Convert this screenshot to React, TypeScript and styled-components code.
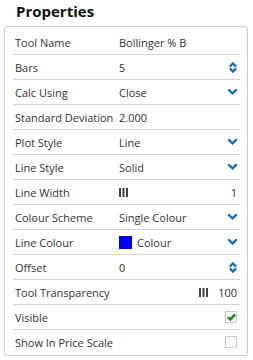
import React from "react";
import styled, { createGlobalStyle } from "styled-components";

const Global = createGlobalStyle`
  html, body { margin: 0; padding: 0; background: #fff; }
  body { font-family: "Open Sans", "Noto Sans", sans-serif; color: #333; }
`;

const Page = styled.div`
  width: 253px;
  height: 360px;
  padding: 0 5px 0 4px;
  box-sizing: border-box;
`;

const Title = styled.h1`
  margin: 0;
  padding: 0 0 0 12px;
  height: 26px;
  line-height: 22px;
  font-size: 15px;
  font-weight: 700;
  color: #111;
`;

const Panel = styled.div`
  border: 1px solid #ccc;
  border-radius: 3px;
  padding: 3px 7px 1px 8px;
`;

const Row = styled.div<{ $last?: boolean }>`
  display: grid;
  grid-template-columns: 104px 1fr auto;
  align-items: center;
  height: 24px;
  padding: 0 3px 0 2px;
  border-bottom: ${(p) => (p.$last ? "none" : "1px solid #d4d4d4")};
  font-size: 11px;
`;

const Label = styled.span`
  white-space: nowrap;
  color: #333;
`;

const Value = styled.span`
  display: flex;
  align-items: center;
  gap: 5px;
  white-space: nowrap;
  color: #333;
`;

const Right = styled.span`
  display: flex;
  align-items: center;
  justify-content: flex-end;
  gap: 10px;
  color: #333;
`;

const Swatch = styled.span<{ $color: string }>`
  display: inline-block;
  width: 13px;
  height: 13px;
  background: ${(p) => p.$color};
`;

const Check = styled.span`
  display: inline-flex;
  align-items: center;
  justify-content: center;
  width: 10px;
  height: 10px;
  border: 1px solid #c8c8c8;
  background: #fff;
`;

const Chevron = () => (
  <svg width="9" height="6" viewBox="0 0 9 6">
    <path d="M1 1 L4.5 4.3 L8 1" fill="none" stroke="#1a6cb6" strokeWidth="2.4" strokeLinecap="square" />
  </svg>
);

const Spinner = () => (
  <svg width="8" height="13" viewBox="0 0 8 13">
    <path d="M0.8 5.6 L4 2.4 L7.2 5.6" fill="none" stroke="#1a6cb6" strokeWidth="2.2" />
    <path d="M0.8 7.4 L4 10.6 L7.2 7.4" fill="none" stroke="#1a6cb6" strokeWidth="2.2" />
  </svg>
);

const Bars = () => (
  <svg width="9" height="9" viewBox="0 0 9 9">
    <rect x="0" y="0" width="2" height="9" fill="#444" />
    <rect x="3.5" y="0" width="2" height="9" fill="#444" />
    <rect x="7" y="0" width="2" height="9" fill="#444" />
  </svg>
);

const Tick = () => (
  <svg width="9" height="8" viewBox="0 0 9 8">
    <path d="M1 4.2 L3.4 6.5 L8 1.5" fill="none" stroke="#238a1e" strokeWidth="2.6" />
  </svg>
);

export default function App() {
  return (
    <Page>
      <Global />
      <Title>Properties</Title>
      <Panel>
        <Row>
          <Label>Tool Name</Label>
          <Value>Bollinger % B</Value>
          <Right />
        </Row>
        <Row>
          <Label>Bars</Label>
          <Value>5</Value>
          <Right><Spinner /></Right>
        </Row>
        <Row>
          <Label>Calc Using</Label>
          <Value>Close</Value>
          <Right><Chevron /></Right>
        </Row>
        <Row>
          <Label>Standard Deviation</Label>
          <Value>2.000</Value>
          <Right />
        </Row>
        <Row>
          <Label>Plot Style</Label>
          <Value>Line</Value>
          <Right><Chevron /></Right>
        </Row>
        <Row>
          <Label>Line Style</Label>
          <Value>Solid</Value>
          <Right><Chevron /></Right>
        </Row>
        <Row>
          <Label>Line Width</Label>
          <Value><Bars /></Value>
          <Right>1</Right>
        </Row>
        <Row>
          <Label>Colour Scheme</Label>
          <Value>Single Colour</Value>
          <Right><Chevron /></Right>
        </Row>
        <Row>
          <Label>Line Colour</Label>
          <Value><Swatch $color="#0000ff" />Colour</Value>
          <Right><Chevron /></Right>
        </Row>
        <Row>
          <Label>Offset</Label>
          <Value>0</Value>
          <Right><Spinner /></Right>
        </Row>
        <Row>
          <Label>Tool Transparency</Label>
          <Value />
          <Right><Bars />100</Right>
        </Row>
        <Row>
          <Label>Visible</Label>
          <Value />
          <Right><Check><Tick /></Check></Right>
        </Row>
        <Row $last>
          <Label>Show In Price Scale</Label>
          <Value />
          <Right><Check /></Right>
        </Row>
      </Panel>
    </Page>
  );
}
